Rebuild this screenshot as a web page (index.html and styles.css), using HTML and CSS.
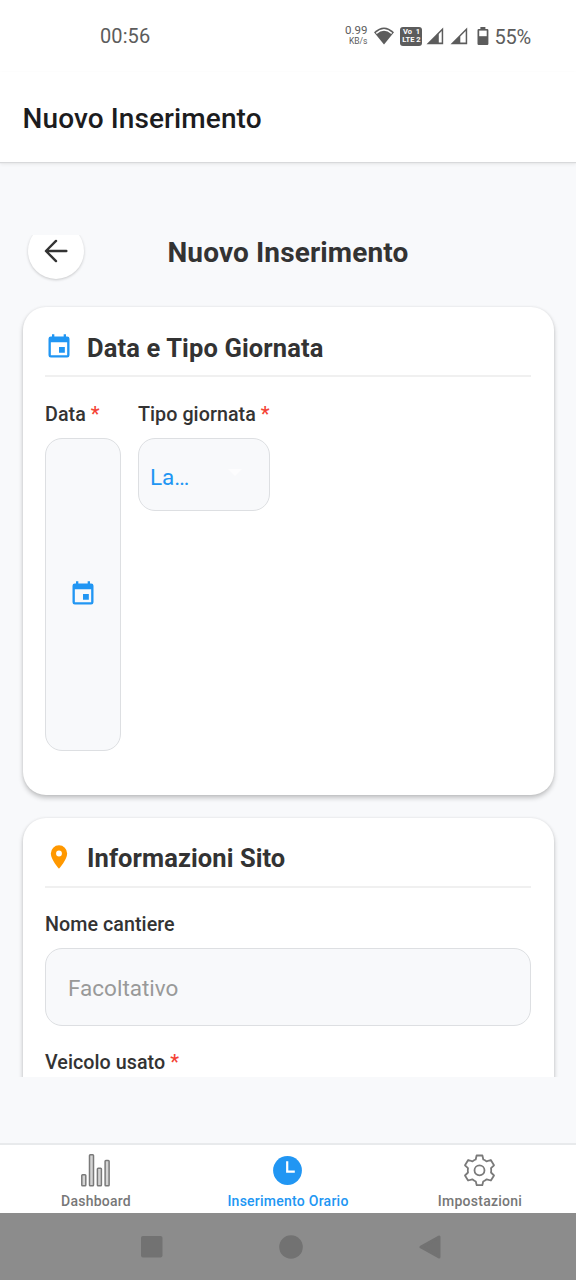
FILE: index.html
```html
<!DOCTYPE html>
<html lang="it">
<head>
<meta charset="utf-8">
<title>Nuovo Inserimento</title>
<link rel="stylesheet" href="styles.css">
</head>
<body>
<div class="screen">
  <div class="status">
    <span class="clock">00:56</span>
    <div class="indicators">
      <div class="speed"><span class="rate">0.99</span><span class="unit">KB/s</span></div>
      <svg class="wifi" width="22" height="20" viewBox="0 0 22 20">
        <path d="M1 6.200Q11-3.200 21 6.200L11 18.400Z" fill="#5c5c5c"/>
        <path d="M2.800 6.800Q11-.6 19.200 6.800L18.300 7.900Q11 1.500 3.700 7.900Z" fill="#fff"/>
      </svg>
      <div class="volte"><span>Vo&nbsp; 1</span><span>LTE 2</span></div>
      <svg class="signal" width="18" height="18" viewBox="0 0 18 18">
        <path d="M17.200.5V17.200H.5Z" fill="#5c5c5c"/><path d="M12.800 7L15.700 4V15.600H12.800Z" fill="#fff"/>
      </svg>
      <svg class="signal second" width="18" height="18" viewBox="0 0 18 18">
        <path d="M17.200.5V17.200H.5Z" fill="#5c5c5c"/><path d="M10.300 9.400L15.700 4V15.600H10.300Z" fill="#fff"/>
      </svg>
      <svg class="battery" width="12" height="19" viewBox="0 0 12 19">
        <path d="M3.400 0h5v2h1.800q1.200 0 1.200 1.200v13.600q0 1.200-1.200 1.200H1.700Q.5 18 .5 16.800V3.200Q.5 2 1.700 2h1.700z" fill="#5c5c5c"/><path d="M2.200 3.600h7.500v5.600H2.200z" fill="#fff"/>
      </svg>
      <span class="percent">55%</span>
    </div>
  </div>
  <header class="appbar"><h1>Nuovo Inserimento</h1></header>
  <main class="content">
    <div class="scroller">
      <div class="titlebar">
        <button class="back" aria-label="Indietro">
          <svg width="34" height="34" viewBox="0 0 24 24"><path d="M19.300 12H5.300M12 4.900L4.900 12L12 19.100" fill="none" stroke="#333" stroke-width="1.700" stroke-linecap="round" stroke-linejoin="round"/></svg>
        </button>
        <h2>Nuovo Inserimento</h2>
      </div>
      <section class="card date-card">
        <div class="card-head">
          <svg width="28" height="28" viewBox="0 0 24 24"><path d="M17 12h-5v5h5v-5zM16 1v2H8V1H6v2H5a2 2 0 0 0-2 2v14a2 2 0 0 0 2 2h14a2 2 0 0 0 2-2V5a2 2 0 0 0-2-2h-1V1h-2zm3 18H5V8h14v11z" fill="#2196f3"/></svg>
          <h3>Data e Tipo Giornata</h3>
        </div>
        <div class="fields">
          <div class="field date-field">
            <label>Data <b>*</b></label>
            <div class="input date-input">
              <svg width="28" height="28" viewBox="0 0 24 24"><path d="M17 12h-5v5h5v-5zM16 1v2H8V1H6v2H5a2 2 0 0 0-2 2v14a2 2 0 0 0 2 2h14a2 2 0 0 0 2-2V5a2 2 0 0 0-2-2h-1V1h-2zm3 18H5V8h14v11z" fill="#2196f3"/></svg>
            </div>
          </div>
          <div class="field type-field">
            <label>Tipo giornata <b>*</b></label>
            <div class="input select"><span>La…</span>
              <svg width="14" height="8" viewBox="0 0 14 8"><path d="M0 0h14L7 7z" fill="#fdfdfe"/></svg>
            </div>
          </div>
        </div>
      </section>
      <section class="card site-card">
        <div class="card-head">
          <svg width="28" height="28" viewBox="0 0 24 24"><path d="M12 2a7 7 0 0 0-7 7c0 5.250 7 13 7 13s7-7.750 7-13a7 7 0 0 0-7-7zm0 9.500a2.500 2.500 0 1 1 0-5 2.500 2.500 0 0 1 0 5z" fill="#ff9800"/></svg>
          <h3>Informazioni Sito</h3>
        </div>
        <div class="field">
          <label>Nome cantiere</label>
          <div class="input text-input">Facoltativo</div>
        </div>
        <div class="field next"><label>Veicolo usato <b>*</b></label></div>
      </section>
    </div>
  </main>
  <nav class="tabs">
    <div class="tab">
      <svg width="34" height="34" viewBox="0 0 34 34" fill="#d4d4d4" stroke="#7a7a7a" stroke-width="1.500"><rect x="2.800" y="21.800" width="4" height="11" rx=".8"/><rect x="10.500" y="1.800" width="4" height="31" rx=".8"/><rect x="18.400" y="15.300" width="4" height="17.500" rx=".8"/><rect x="26.100" y="7.500" width="4" height="25.300" rx=".8"/></svg>
      <span>Dashboard</span>
    </div>
    <div class="tab active">
      <svg width="34" height="34" viewBox="0 0 34 34"><circle cx="16.500" cy="17.500" r="14.400" fill="#2196f3"/><path d="M16.200 8.300V18.600H23.800" fill="none" stroke="#fff" stroke-width="2.200"/></svg>
      <span>Inserimento Orario</span>
    </div>
    <div class="tab">
      <svg width="34" height="34" viewBox="0 0 34 34" fill="none" stroke="#7a7a7a" stroke-width="1.800" stroke-linejoin="round"><path d="M13.600 2.500H19.400L20.300 6.500Q22 7 23.500 8.400L27.800 7L31 12.300L28 15.200Q28.500 17.300 28 19.500L31 22.500L27.900 27.500L23.700 26.300Q22 27.700 20.200 28.500L19.300 32.200H13.700L12.800 28.500Q11 27.700 9.300 26.300L5.100 27.500L2 22.500L5 19.500Q4.500 17.300 5 15.200L2 12.300L5.200 7L9.500 8.400Q11 7 12.700 6.500Z"/><circle cx="16.500" cy="17.300" r="5"/></svg>
      <span>Impostazioni</span>
    </div>
  </nav>
  <div class="sysnav">
    <svg class="recent" width="22" height="22"><rect width="21.500" height="21.500" rx="2" fill="#727272"/></svg>
    <svg class="home" width="24" height="24"><circle cx="12" cy="12" r="11.800" fill="#727272"/></svg>
    <svg class="prev" width="22" height="24"><path d="M2 12L20 2V22Z" fill="#727272" stroke="#727272" stroke-width="3" stroke-linejoin="round"/></svg>
  </div>
</div>
</body>
</html>
```
FILE: styles.css
```css
* { box-sizing: border-box; }
body { margin: 0; font-family: Roboto, sans-serif; color: #333; }
h1, h2, h3 { margin: 0; }
svg { display: block; flex: none; }
.screen { width: 576px; height: 1280px; display: flex; flex-direction: column; background: #f8f9fb; overflow: hidden; }

.status { height: 72px; flex: none; background: #fff; display: flex; justify-content: space-between; padding: 0 45px 0 100px; color: #5c5c5c; align-items: center; }
.clock { font-size: 20px; line-height: 24px; letter-spacing: 0.1px; }
.indicators { display: flex; align-items: center; height: 24px; }
.speed { display: flex; flex-direction: column; align-items: flex-end; margin-right: 6px; }
.rate { font-size: 11.5px; line-height: 11px; }
.unit { font-size: 8.5px; line-height: 11px; }
.wifi { margin-right: 5px; }
.volte { width: 22px; height: 19px; border-radius: 3px; background: #5c5c5c; color: #fff; font-size: 7.5px; line-height: 8px; font-weight: 700; display: flex; flex-direction: column; justify-content: center; align-items: center; margin-right: 4px; }
.signal { margin-right: 6px; }
.second { margin-right: 9px; }
.battery { margin-right: 5px; }
.percent { font-size: 20px; line-height: 24px; letter-spacing: -0.2px; padding-top: 2px; }

.appbar { height: 90px; flex: none; background: #fff; padding: 30px 23px 0 22.500px; position: relative; box-shadow: 0 1px 1px #d8d9db, 0 2px 4px rgba(0,0,0,.08); }
.appbar h1 { font-size: 28px; line-height: 33px; font-weight: 500; letter-spacing: 0.1px; color: #1c1c1e; }

.content { flex: 1; min-height: 0; padding-top: 73px; }
.scroller { height: 842px; overflow: hidden; padding: 0 22px; }
.titlebar { display: grid; grid-template-columns: 68px 1fr 68px; align-items: center; height: 56px; margin-top: -12px; margin-bottom: 28px; }
.back { width: 56px; height: 56px; margin-left: 6px; border: 0; padding: 0; border-radius: 50%; background: #fff; display: grid; place-items: center; box-shadow: 0 1px 3px rgba(0,0,0,.2); }
.titlebar h2 { text-align: center; font-size: 28px; line-height: 34px; font-weight: 700; letter-spacing: 0.13px; padding-top: 3px; }

.card { background: #fff; border-radius: 23px; padding: 23px 23px 0 22.500px; margin: 0 0 23px 0.500px; box-shadow: 0 3px 5px rgba(0,0,0,.22), 0 0 3px rgba(0,0,0,.08); }
.date-card { height: 488px; }
.site-card { height: 500px; }
.card-head { display: flex; align-items: center; gap: 14px; height: 47px; padding-bottom: 12px; border-bottom: 2px solid #f0f0f0; }
.card-head svg { margin-top: 0; }
.card-head h3 { font-size: 25.500px; line-height: 34px; font-weight: 700; letter-spacing: 0.13px; padding-top: 2px; }
.site-card .card-head svg { margin-top: -1px; }
.site-card .card-head h3 { letter-spacing: 0.08px; padding-top: 1px; }
.fields { display: flex; gap: 17px; }
.field { display: flex; flex-direction: column; padding-top: 26px; }
.date-field { width: 76px; }
.type-field { width: 132px; }
label { font-size: 19.700px; line-height: 24px; font-weight: 500; margin-bottom: 11px; letter-spacing: 0.05px; white-space: nowrap; }
label b { color: #f44336; font-weight: 500; }
.input { border: 1.400px solid #dddfe2; border-radius: 17px; background: #f8f9fb; display: flex; align-items: center; }
.date-input { height: 313px; justify-content: center; }
.date-input svg { margin: -2px 1px 0 0; }
.select { height: 73px; padding: 5px 27px 0 11px; justify-content: space-between; font-size: 22.500px; color: #2196f3; }
.select svg { margin-top: -8px; }
.site-card .field { padding-top: 25px; }
.text-input { height: 78px; padding: 2px 22px 0; font-size: 22.500px; color: #999; }

.tabs { height: 70px; flex: none; background: #fff; border-top: 2px solid #e8eaec; display: grid; grid-template-columns: repeat(3, 1fr); position: relative; }
.tab { display: flex; flex-direction: column; align-items: center; padding-top: 8px; color: #777; font-size: 14px; letter-spacing: 0.25px; font-weight: 500; line-height: 17px; gap: 6px; }
.active { color: #2196f3; }
.sysnav { height: 67px; flex: none; background: #8c8c8c; display: flex; align-items: center; padding-left: 141px; }
.home { margin-left: 116px; }
.prev { margin-left: 116px; }
```
